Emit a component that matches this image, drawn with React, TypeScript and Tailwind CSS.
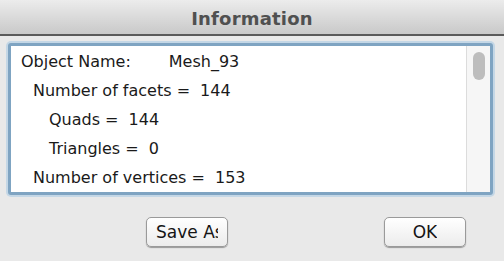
import React from 'react';

const lines = [
  { label: 'Object Name:', value: 'Mesh_93', indent: 'pl-[10px]', gap: 'ml-[38px]' },
  { label: 'Number of facets =', value: '144', indent: 'pl-[22px]', gap: 'ml-[10px]' },
  { label: 'Quads =', value: '144', indent: 'pl-[38px]', gap: 'ml-[10px]' },
  { label: 'Triangles =', value: '0', indent: 'pl-[38px]', gap: 'ml-[10px]' },
  { label: 'Number of vertices =', value: '153', indent: 'pl-[22px]', gap: 'ml-[10px]' },
];

const Button: React.FC<{ label: string }> = ({ label }) => (
  <button className="w-[82px] h-[30px] rounded-[5px] border border-[#9a9a9a] bg-gradient-to-b from-white to-[#ececec] shadow-[0_1px_1px_rgba(0,0,0,0.35)] flex items-center justify-center px-[9px]">
    <span className="block max-w-full overflow-hidden whitespace-nowrap text-[17px] text-[#151515] leading-[22px]">
      {label}
    </span>
  </button>
);

export default function App() {
  return (
    <div className="w-[504px] h-[261px] bg-[#e9e9e9] flex flex-col font-['DejaVu_Sans',sans-serif] overflow-hidden">
      <div className="h-[36px] shrink-0 bg-gradient-to-b from-[#ececec] to-[#c9c9c9] border-b-2 border-[#5a5a5a] flex items-center justify-center pt-[2px]">
        <span className="text-[18px] font-bold text-[#505050] tracking-[0.2px]">Information</span>
      </div>
      <div className="pl-[8px] pt-[7px]">
        <div className="w-[485px] h-[152px] border-[3px] border-[#7fa4c2] rounded-[3px] shadow-[0_0_0_2px_#c4d7e6] bg-white flex">
          <div className="flex-1 flex flex-col pt-[2px]">
            {lines.map((l) => (
              <div key={l.label} className={`h-[30px] flex items-center text-[16px] text-[#1a1a1a] whitespace-nowrap ${l.indent}`}>
                <span>{l.label}</span>
                <span className={l.gap}>{l.value}</span>
              </div>
            ))}
          </div>
          <div className="w-[24px] border-l border-[#dcdcdc] bg-[#f6f6f6] flex justify-center pt-[6px]">
            <div className="w-[12px] h-[28px] rounded-full bg-[#bdbdbd]" />
          </div>
        </div>
      </div>
      <div className="flex pl-[146px] pt-[22px] gap-[156px]">
        <Button label="Save As" />
        <Button label="OK" />
      </div>
    </div>
  );
}
